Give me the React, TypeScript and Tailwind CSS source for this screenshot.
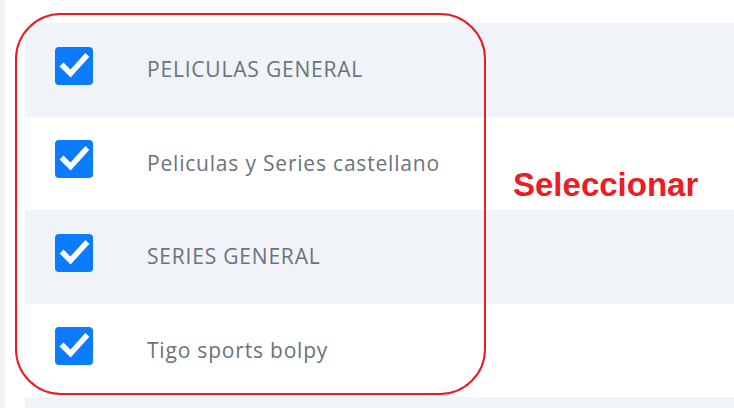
const rows = [
  { label: "PELICULAS GENERAL", shaded: true },
  { label: "Peliculas y Series castellano", shaded: false },
  { label: "SERIES GENERAL", shaded: true },
  { label: "Tigo sports bolpy", shaded: false },
];

function CheckBox() {
  return (
    <svg width="38" height="38" viewBox="0 0 38 38" className="shrink-0 mb-[8px]">
      <rect x="0" y="0" width="38" height="38" rx="4" fill="#0b7bff" />
      <path
        d="M8.5 19.5 L15.5 26.5 L30.5 10"
        fill="none"
        stroke="#ffffff"
        strokeWidth="5.5"
        strokeLinecap="square"
      />
    </svg>
  );
}

export default function App() {
  return (
    <div className="relative flex w-[734px] h-[408px] overflow-hidden bg-white font-['Open_Sans',sans-serif]">
      <div className="w-[5px] shrink-0 bg-[#f0f3f6]" />
      <div className="flex-1 pl-[20px] pt-[23px]">
        {rows.map((r) => (
          <div
            key={r.label}
            className={`flex items-center h-[93.5px] pl-[30px] ${r.shaded ? "bg-[#f0f3f7]" : "bg-white"}`}
          >
            <CheckBox />
            <span className="ml-[54px] text-[21px] text-[#6b737b] tracking-[0.8px]">
              {r.label}
            </span>
          </div>
        ))}
        <div className="h-[20px] bg-[#f0f3f7]" />
      </div>

      {/* annotation overlay */}
      <div className="absolute left-[15px] top-[13px] w-[471px] h-[382px] rounded-[46px] border-2 border-[#ec1c24]" />
      <div className="absolute left-[513px] top-[160px] text-[33px] font-bold text-[#ec1c24] font-['Liberation_Sans',sans-serif]">
        Seleccionar
      </div>
    </div>
  );
}
